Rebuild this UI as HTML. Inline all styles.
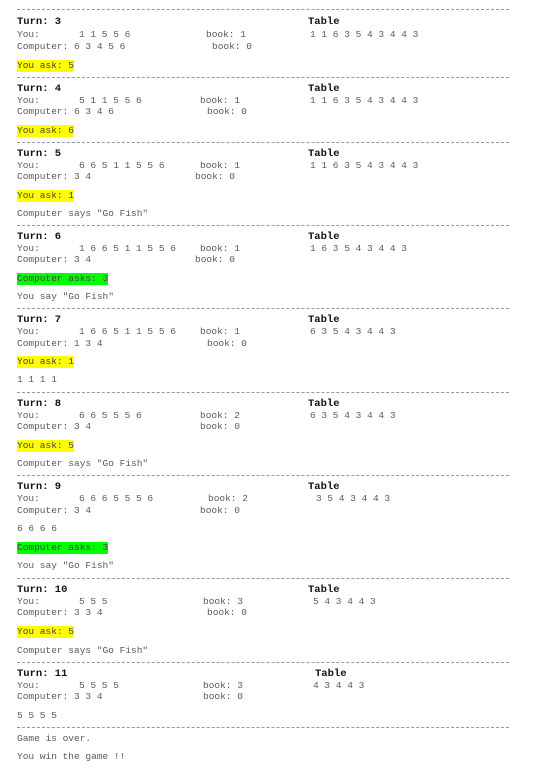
<!DOCTYPE html>
<html><head><meta charset="utf-8"><style>
body{margin:0;width:556px;height:772px;background:#fff;position:relative;overflow:hidden;font-family:"Liberation Mono",monospace;font-size:9.5px;color:#5a5a5a}
div{position:absolute;white-space:pre;line-height:12px}
.d{left:17px;width:492px;height:0;border-top:1px dashed #999}
.b{font-weight:bold;color:#111;font-size:10.5px}
.y{background:#ffff00;color:#444}
.g{background:#00ff00;color:#444}
</style></head><body>
<div class="d" style="top:9px"></div>
<div class="b" style="left:17px;top:16px">Turn: 3</div><div class="b" style="left:308px;top:16px">Table</div>
<div style="left:17px;top:29px">You:</div><div style="left:79px;top:29px">1 1 5 5 6</div><div style="left:206px;top:29px">book: 1</div><div style="left:310px;top:29px">1 1 6 3 5 4 3 4 4 3</div>
<div style="left:17px;top:41px">Computer: 6 3 4 5 6</div><div style="left:212px;top:41px">book: 0</div>
<div class="y" style="left:17px;top:60px">You ask: 5</div>

<div class="d" style="top:77px"></div>
<div class="b" style="left:17px;top:83px">Turn: 4</div><div class="b" style="left:308px;top:83px">Table</div>
<div style="left:17px;top:95px">You:</div><div style="left:79px;top:95px">5 1 1 5 5 6</div><div style="left:200px;top:95px">book: 1</div><div style="left:310px;top:95px">1 1 6 3 5 4 3 4 4 3</div>
<div style="left:17px;top:106px">Computer: 6 3 4 6</div><div style="left:207px;top:106px">book: 0</div>
<div class="y" style="left:17px;top:125px">You ask: 6</div>

<div class="d" style="top:142px"></div>
<div class="b" style="left:17px;top:148px">Turn: 5</div><div class="b" style="left:308px;top:148px">Table</div>
<div style="left:17px;top:160px">You:</div><div style="left:79px;top:160px">6 6 5 1 1 5 5 6</div><div style="left:200px;top:160px">book: 1</div><div style="left:310px;top:160px">1 1 6 3 5 4 3 4 4 3</div>
<div style="left:17px;top:171px">Computer: 3 4</div><div style="left:195px;top:171px">book: 0</div>
<div class="y" style="left:17px;top:190px">You ask: 1</div>
<div style="left:17px;top:208px">Computer says "Go Fish"</div>

<div class="d" style="top:225px"></div>
<div class="b" style="left:17px;top:231px">Turn: 6</div><div class="b" style="left:308px;top:231px">Table</div>
<div style="left:17px;top:243px">You:</div><div style="left:79px;top:243px">1 6 6 5 1 1 5 5 6</div><div style="left:200px;top:243px">book: 1</div><div style="left:310px;top:243px">1 6 3 5 4 3 4 4 3</div>
<div style="left:17px;top:254px">Computer: 3 4</div><div style="left:195px;top:254px">book: 0</div>
<div class="g" style="left:17px;top:273px">Computer asks: 3</div>
<div style="left:17px;top:291px">You say "Go Fish"</div>

<div class="d" style="top:308px"></div>
<div class="b" style="left:17px;top:314px">Turn: 7</div><div class="b" style="left:308px;top:314px">Table</div>
<div style="left:17px;top:326px">You:</div><div style="left:79px;top:326px">1 6 6 5 1 1 5 5 6</div><div style="left:200px;top:326px">book: 1</div><div style="left:310px;top:326px">6 3 5 4 3 4 4 3</div>
<div style="left:17px;top:338px">Computer: 1 3 4</div><div style="left:207px;top:338px">book: 0</div>
<div class="y" style="left:17px;top:356px">You ask: 1</div>
<div style="left:17px;top:374px">1 1 1 1</div>

<div class="d" style="top:392px"></div>
<div class="b" style="left:17px;top:398px">Turn: 8</div><div class="b" style="left:308px;top:398px">Table</div>
<div style="left:17px;top:410px">You:</div><div style="left:79px;top:410px">6 6 5 5 5 6</div><div style="left:200px;top:410px">book: 2</div><div style="left:310px;top:410px">6 3 5 4 3 4 4 3</div>
<div style="left:17px;top:421px">Computer: 3 4</div><div style="left:200px;top:421px">book: 0</div>
<div class="y" style="left:17px;top:440px">You ask: 5</div>
<div style="left:17px;top:458px">Computer says "Go Fish"</div>

<div class="d" style="top:475px"></div>
<div class="b" style="left:17px;top:481px">Turn: 9</div><div class="b" style="left:308px;top:481px">Table</div>
<div style="left:17px;top:493px">You:</div><div style="left:79px;top:493px">6 6 6 5 5 5 6</div><div style="left:208px;top:493px">book: 2</div><div style="left:316px;top:493px">3 5 4 3 4 4 3</div>
<div style="left:17px;top:505px">Computer: 3 4</div><div style="left:200px;top:505px">book: 0</div>
<div style="left:17px;top:523px">6 6 6 6</div>
<div class="g" style="left:17px;top:542px">Computer asks: 3</div>
<div style="left:17px;top:560px">You say "Go Fish"</div>

<div class="d" style="top:578px"></div>
<div class="b" style="left:17px;top:584px">Turn: 10</div><div class="b" style="left:308px;top:584px">Table</div>
<div style="left:17px;top:596px">You:</div><div style="left:79px;top:596px">5 5 5</div><div style="left:203px;top:596px">book: 3</div><div style="left:313px;top:596px">5 4 3 4 4 3</div>
<div style="left:17px;top:607px">Computer: 3 3 4</div><div style="left:207px;top:607px">book: 0</div>
<div class="y" style="left:17px;top:626px">You ask: 5</div>
<div style="left:17px;top:645px">Computer says "Go Fish"</div>

<div class="d" style="top:662px"></div>
<div class="b" style="left:17px;top:668px">Turn: 11</div><div class="b" style="left:315px;top:668px">Table</div>
<div style="left:17px;top:680px">You:</div><div style="left:79px;top:680px">5 5 5 5</div><div style="left:203px;top:680px">book: 3</div><div style="left:313px;top:680px">4 3 4 4 3</div>
<div style="left:17px;top:691px">Computer: 3 3 4</div><div style="left:203px;top:691px">book: 0</div>
<div style="left:17px;top:710px">5 5 5 5</div>

<div class="d" style="top:727px"></div>
<div style="left:17px;top:733px">Game is over.</div>
<div style="left:17px;top:751px">You win the game !!</div>
</body></html>
